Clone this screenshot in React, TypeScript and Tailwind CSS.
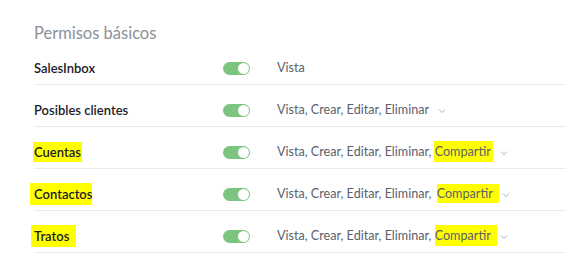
import type { ReactNode } from "react";

type Row = {
  name: ReactNode;
  perms: ReactNode;
  chevron?: boolean;
};

const BASE = "Vista, Crear, Editar, Eliminar";

const ROWS: Row[] = [
  { name: "SalesInbox", perms: "Vista" },
  { name: "Posibles clientes", perms: BASE, chevron: true },
  {
    name: <span className="-ml-px pl-px pr-px py-[2px] bg-[#ffff00]">Cuentas</span>,
    perms: (
      <>
        {BASE},{" "}
        <span className="-ml-[1px] -mr-[2px] pl-[1px] pr-[2px] py-[3px] bg-[#ffff00]">Compartir</span>
      </>
    ),
    chevron: true,
  },
  {
    name: <span className="-ml-1 pl-1 pr-0 py-[3px] bg-[#ffff00]">Contactos</span>,
    perms: (
      <>
        {BASE},{" "}
        <span className="ml-[2px] -mr-[6px] pl-0 pr-[6px] py-[2px] bg-[#ffff00]">Compartir</span>
      </>
    ),
    chevron: true,
  },
  {
    name: <span className="-ml-[3px] pl-[3px] pr-[7px] py-[3px] bg-[#ffff00]">Tratos</span>,
    perms: (
      <>
        {BASE},{" "}
        <span className="-mr-[6px] pl-0 pr-[6px] py-[3px] bg-[#ffff00]">Compartir</span>
      </>
    ),
    chevron: true,
  },
];

function Toggle() {
  return (
    <div className="flex h-[13px] w-[27px] items-center justify-end rounded-full bg-[#7cc580] pr-px">
      <div className="h-[11px] w-[11px] rounded-full bg-white" />
    </div>
  );
}

function Chevron() {
  return (
    <svg width="8" height="6" viewBox="0 0 8 6" className="ml-[9px] mt-[2px]">
      <path d="M1 1.5 L4 4.5 L7 1.5" fill="none" stroke="#a9adb4" strokeWidth="1" />
    </svg>
  );
}

export default function App() {
  return (
    <div
      className="h-[264px] w-[566px] overflow-hidden bg-white pl-[34px]"
      style={{ fontFamily: "Lato, 'Open Sans', sans-serif" }}
    >
      <h2 className="pt-[21px] text-[16.5px] leading-[24px] font-normal text-[#8c9098]">Permisos básicos</h2>

      <div>
        {ROWS.map((r, i) => (
          <div
            key={i}
            className={`flex items-center border-b border-[#e9eaec] pb-[6px] ${i === 0 ? "pt-[13px]" : "pt-[15px]"}`}
          >
            <div className="w-[189px] text-[13px] leading-[20px] font-semibold text-[#1d2127]">{r.name}</div>
            <Toggle />
            <div className="ml-[27px] flex items-center text-[12.6px] leading-[20px] text-[#5b616d]">
              <span>{r.perms}</span>
              {r.chevron && <Chevron />}
            </div>
          </div>
        ))}
      </div>
    </div>
  );
}
